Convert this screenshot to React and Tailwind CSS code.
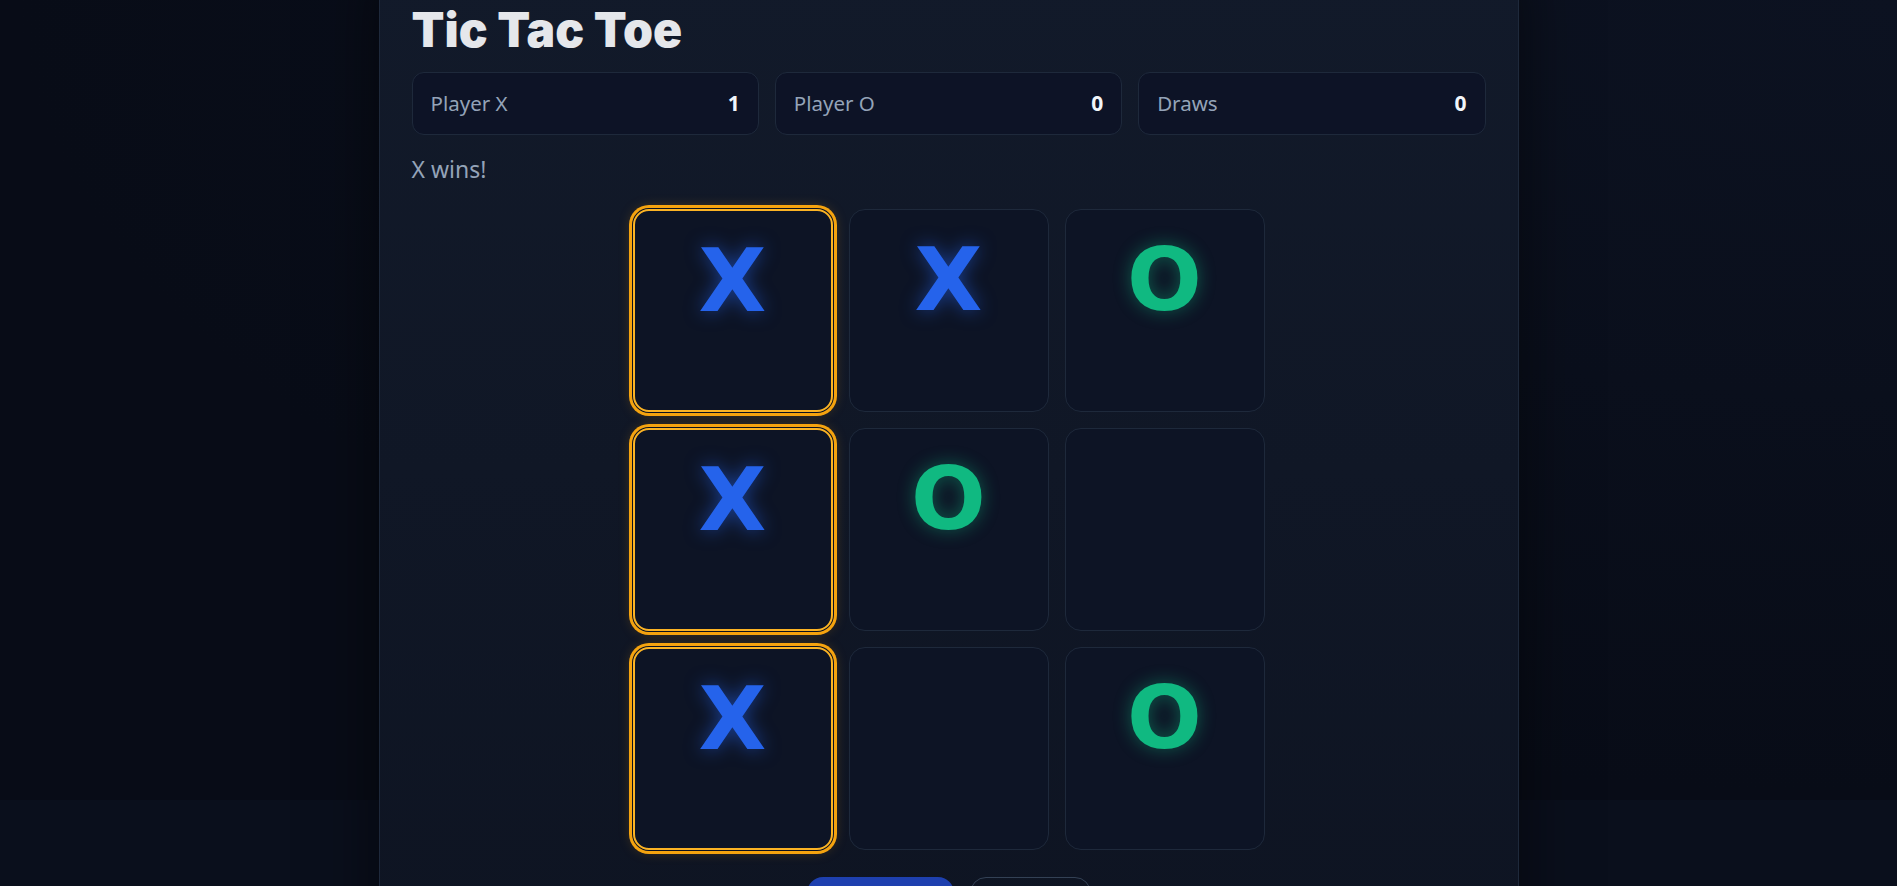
import React from "react";

const board = [
  ["X", "X", "O"],
  ["X", "O", ""],
  ["X", "", "O"],
];
const winning = [0, 3, 6];

function Cell({ value, win }) {
  const base =
    "w-[200px] h-[203px] rounded-2xl bg-[#0d1425] flex justify-center items-start pt-[26px]";
  const border = win
    ? "border-2 border-[#fbb324] ring-[3px] ring-[#f5a30f] ring-offset-1 ring-offset-[#0b1120] shadow-[0_0_14px_rgba(245,158,11,0.35)]"
    : "border border-[#1e293b]";
  return (
    <div className={`${base} ${border}`}>
      {value === "X" && (
        <span className="text-[88px] leading-none font-bold text-[#2563eb] [font-family:'DejaVu_Sans',sans-serif] [text-shadow:0_0_18px_rgba(37,99,235,0.55)]">
          X
        </span>
      )}
      {value === "O" && (
        <span className="text-[88px] leading-none font-bold text-[#10b981] [font-family:'DejaVu_Sans',sans-serif] [text-shadow:0_0_18px_rgba(16,185,129,0.45)]">
          O
        </span>
      )}
    </div>
  );
}

function Score({ label, value }) {
  return (
    <div className="h-[63px] rounded-xl border border-[#1e293b] bg-[#0d1326] px-[18px] flex items-center justify-between">
      <span className="text-[20.5px] text-[#94a3b8]">{label}</span>
      <span className="text-[21px] font-bold text-[#f1f5f9]">{value}</span>
    </div>
  );
}

export default function App() {
  return (
    <div className="min-h-screen w-full bg-[#0a0f1c] bg-[radial-gradient(ellipse_at_top_right,#0c1221_0%,#080c17_70%)] bg-no-repeat bg-[length:100%_800px] flex justify-center [font-family:'Noto_Sans','Open_Sans',sans-serif]">
      <div className="w-[1140px] -mt-[33px] border border-[#1e293b] bg-linear-to-b from-[#121a2a] to-[#0e1422] shadow-[0_0_60px_rgba(0,0,0,0.55)] px-8 pt-8 pb-10">
        <h1 className="text-[48px] leading-[1.25] font-black text-[#e5e7eb] [font-family:'Inter',sans-serif]">
          Tic Tac Toe
        </h1>
        <div className="mt-3 grid grid-cols-3 gap-4">
          <Score label="Player X" value="1" />
          <Score label="Player O" value="0" />
          <Score label="Draws" value="0" />
        </div>
        <p className="mt-5 text-[23px] leading-[28px] text-[#94a3b8]">X wins!</p>
        <div className="mt-[26px] flex justify-center">
          <div className="grid grid-cols-3 gap-4">
            {board.flat().map((v, i) => (
              <Cell key={i} value={v} win={winning.includes(i)} />
            ))}
          </div>
        </div>
        <div className="mt-[27px] flex justify-center gap-4">
          <button className="w-[147px] h-[56px] rounded-2xl bg-[#1e40af] text-white text-[18px] font-semibold">
            New Round
          </button>
          <button className="w-[121px] h-[56px] rounded-2xl border border-[#334155] text-[#cbd5e1] text-[18px] font-semibold">
            Reset
          </button>
        </div>
      </div>
    </div>
  );
}
